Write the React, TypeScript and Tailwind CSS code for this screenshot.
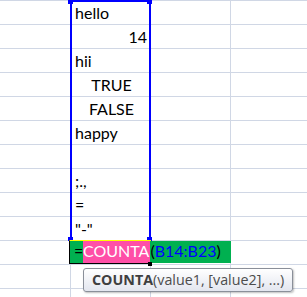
const CELLS: { text: string; align: 'left' | 'right' | 'center' }[] = [
  { text: 'hello', align: 'left' },
  { text: '14', align: 'right' },
  { text: 'hii', align: 'left' },
  { text: 'TRUE', align: 'center' },
  { text: 'FALSE', align: 'center' },
  { text: 'happy', align: 'left' },
  { text: '', align: 'left' },
  { text: ';.,', align: 'left' },
  { text: '=', align: 'left' },
  { text: '"-"', align: 'left' },
  { text: '', align: 'left' },
  { text: '', align: 'left' },
  { text: '', align: 'left' },
];

const ALIGN: Record<string, string> = {
  left: 'justify-start pl-[4px]',
  right: 'justify-end pr-[3px]',
  center: 'justify-center pl-[2px]',
};

function Handle({ className }: { className: string }) {
  return <div className={`absolute w-[5px] h-[4px] bg-[#0000ff] ${className}`} />;
}

export default function App() {
  return (
    <div
      className="relative w-[307px] h-[297px] overflow-hidden bg-white text-black"
      style={{ fontFamily: 'Lato, "Open Sans", sans-serif' }}
    >
      {/* grid */}
      {CELLS.map((c, i) => (
        <div key={i} className="flex h-[24px] border-t border-[#d0d7e5]">
          <div className="w-[71px] shrink-0 border-r border-[#d0d7e5]" />
          <div
            className={`w-[80px] shrink-0 flex items-end border-r border-[#d0d7e5] text-[16px] leading-[23px] whitespace-nowrap ${ALIGN[c.align]}`}
          >
            {c.text}
          </div>
          <div className="w-[80px] shrink-0 border-r border-[#d0d7e5]" />
          <div className="flex-1" />
        </div>
      ))}

      {/* selected range */}
      <div className="absolute left-[70px] top-0 w-[81px] h-[240px] border-t-2 border-l-2 border-r-2 border-[#0000ff]" />
      <Handle className="left-[68px] top-0" />
      <Handle className="left-[147px] top-0" />
      <Handle className="left-[68px] top-[237px]" />
      <Handle className="left-[147px] top-[237px]" />

      {/* in-cell editor */}
      <div className="absolute left-[69px] top-[240px] w-[82px] h-[24px] border-l border-b border-black border-t border-t-[#ffff00]" />
      <div className="absolute left-[70px] top-[241px] w-[161px] h-[22px] flex text-[16px] leading-[20px] whitespace-nowrap">
        <span className="bg-[#00b050] w-[13px] pl-[4px]">=</span>
        <span className="bg-[#ff4fa7] text-white pr-[1px]">COUNTA</span>
        <span className="bg-[#00b050] flex-1">
          (<span className="text-[#0000ff]">B14:B23</span>)
        </span>
      </div>
      <div className="absolute left-[148px] top-[262px] w-[4px] h-[4px] bg-black" />

      {/* function tooltip */}
      <div
        className="absolute left-[83px] top-[268px] w-[210px] h-[24px] rounded-[3px] border border-[#8a8f99] bg-gradient-to-b from-white to-[#e3e6ef] shadow-[1px_1px_2px_rgba(0,0,0,0.25)] pl-[8px] flex items-center text-[14.3px] text-[#4c4c4c] whitespace-nowrap"
        style={{ fontFamily: '"Open Sans", sans-serif' }}
      >
        <span className="font-bold text-[#3f3f3f]">COUNTA</span>
        <span>(value1, [value2], ...)</span>
      </div>
    </div>
  );
}
